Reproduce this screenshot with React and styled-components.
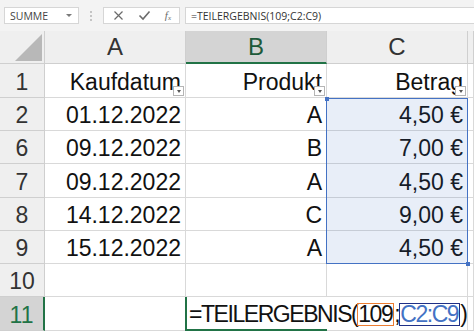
import React from 'react';
import styled, { createGlobalStyle } from 'styled-components';

const GREEN = '#217346';
const GRID = '#d9d9d9';

const GlobalStyle = createGlobalStyle`
  html, body {
    margin: 0;
    padding: 0;
    background: #ffffff;
    overflow: hidden;
  }
  * { box-sizing: border-box; }
`;

const rows = [
  { n: '1', a: 'Kaufdatum', b: 'Produkt', c: 'Betrag', head: true },
  { n: '2', a: '01.12.2022', b: 'A', c: '4,50 €' },
  { n: '6', a: '09.12.2022', b: 'B', c: '7,00 €' },
  { n: '7', a: '09.12.2022', b: 'A', c: '4,50 €' },
  { n: '8', a: '14.12.2022', b: 'C', c: '9,00 €' },
  { n: '9', a: '15.12.2022', b: 'A', c: '4,50 €' },
  { n: '10' },
  { n: '11', active: true },
];

export default function App() {
  return (
    <Page>
      <GlobalStyle />
      <Toolbar>
        <NameBox>
          <span>SUMME</span>
          <Caret />
        </NameBox>
        <Grip>
          <i /><i /><i />
        </Grip>
        <ButtonBox>
          <svg width="11" height="11" viewBox="0 0 11 11">
            <path d="M1.5 1.5 L9.5 9.5 M9.5 1.5 L1.5 9.5" stroke="#6b6b6b" strokeWidth="1.2" fill="none" />
          </svg>
          <svg width="13" height="11" viewBox="0 0 13 11">
            <path d="M1.5 5.5 L5 9 L11.5 1.5" stroke="#6b6b6b" strokeWidth="1.6" fill="none" />
          </svg>
          <Fx>f<sub>x</sub></Fx>
        </ButtonBox>
        <FormulaBox>=TEILERGEBNIS(109;C2:C9)</FormulaBox>
      </Toolbar>

      <Sheet>
        <Corner $row={1} $col={1}><Triangle /></Corner>
        <ColHead $row={1} $col={2}>A</ColHead>
        <ColHead $row={1} $col={3} $selected>B</ColHead>
        <ColHead $row={1} $col={4}>C</ColHead>
        <ColHead $row={1} $col={5} />

        {rows.map((r, i) => {
          const row = i + 2;
          return (
            <React.Fragment key={r.n}>
              <RowHead $row={row} $col={1} $selected={r.active}>{r.n}</RowHead>
              <Cell $row={row} $col={2}>
                {r.a}
                {r.head && <FilterButton />}
              </Cell>
              {r.active ? (
                <ActiveCell $row={row} $col={3}>
                  =TEILERGEBNIS(<RefBox $color="#ed7d31">109</RefBox>;<RefBox $color="#1f2f86" $text="#4472c4">C2:C9</RefBox>)
                </ActiveCell>
              ) : (
                <Cell $row={row} $col={3}>
                  {r.b}
                  {r.head && <FilterButton />}
                </Cell>
              )}
              <Cell $row={row} $col={4}>
                {r.c}
                {r.head && <FilterButton />}
              </Cell>
              <Cell $row={row} $col={5} />
            </React.Fragment>
          );
        })}

        <Selection />
      </Sheet>
    </Page>
  );
}

const Page = styled.div`
  width: 474px;
  height: 334px;
  background: #ffffff;
  font-family: "Liberation Sans", Arial, sans-serif;
`;

const Toolbar = styled.div`
  height: 31px;
  background: #f3f3f3;
  display: flex;
  align-items: flex-start;
  padding: 7px 0 0 4px;
`;

const Box = styled.div`
  height: 17px;
  background: #ffffff;
  border: 1px solid #d6d6d6;
  display: flex;
  align-items: center;
`;

const NameBox = styled(Box)`
  width: 75px;
  padding: 0 6px 0 5px;
  justify-content: space-between;
  font-family: "Open Sans", sans-serif;
  font-size: 10.5px;
  color: #444444;
`;

const Caret = styled.span`
  width: 0;
  height: 0;
  border-left: 3px solid transparent;
  border-right: 3px solid transparent;
  border-top: 3px solid #7a7a7a;
`;

const Grip = styled.div`
  width: 24px;
  height: 17px;
  display: flex;
  flex-direction: column;
  align-items: center;
  justify-content: center;
  gap: 2px;

  i {
    width: 2px;
    height: 2px;
    background: #c4c4c4;
  }
`;

const ButtonBox = styled(Box)`
  width: 77px;
  padding: 0 8px 0 9px;
  justify-content: space-between;
`;

const Fx = styled.span`
  font-family: "Liberation Serif", serif;
  font-style: italic;
  font-size: 11px;
  color: #6b6b6b;

  sub {
    font-size: 7px;
    vertical-align: -1px;
  }
`;

const FormulaBox = styled(Box)`
  flex: 1;
  margin-left: 5px;
  padding-left: 5px;
  border-right: none;
  font-family: "Open Sans", sans-serif;
  font-size: 10.5px;
  color: #333333;
  white-space: nowrap;
`;

const Sheet = styled.div`
  display: grid;
  grid-template-columns: 45px 141px 141px 141px 1fr;
  grid-template-rows: 33px 34px 33px 33px 34px 33px 33px 33px 34px;
  font-size: 23px;
  color: #111111;
`;

const Placed = styled.div`
  grid-row: ${p => p.$row};
  grid-column: ${p => p.$col};
  position: relative;
  border-right: 1px solid ${GRID};
  border-bottom: 1px solid ${GRID};
  display: flex;
  align-items: center;
  white-space: nowrap;
`;

const Corner = styled(Placed)`
  background: #efefef;
  border-color: #cfcfcf;
`;

const Triangle = styled.span`
  position: absolute;
  right: 2px;
  bottom: 2px;
  width: 0;
  height: 0;
  border-left: 27px solid transparent;
  border-bottom: 27px solid #b8b8b8;
`;

const ColHead = styled(Placed)`
  justify-content: center;
  background: ${p => (p.$selected ? '#d4d4d4' : '#efefef')};
  border-color: #cfcfcf;
  border-bottom: ${p => (p.$selected ? `2px solid ${GREEN}` : '1px solid #cfcfcf')};
  color: ${p => (p.$selected ? '#1e5a3a' : '#333333')};
  font-size: 24px;
`;

const RowHead = styled(Placed)`
  justify-content: center;
  padding-top: 3px;
  background: ${p => (p.$selected ? '#d4d4d4' : '#efefef')};
  border-color: #cfcfcf;
  border-right: ${p => (p.$selected ? `2px solid ${GREEN}` : '1px solid #cfcfcf')};
  color: ${p => (p.$selected ? GREEN : '#333333')};
`;

const Cell = styled(Placed)`
  justify-content: flex-end;
  padding: 3px 4px 0 0;
  background: #ffffff;
`;

const ActiveCell = styled(Placed)`
  z-index: 3;
  overflow: visible;
  padding: 3px 0 0 2px;
  border-left: 2px solid ${GREEN};
  border-bottom: 2px solid ${GREEN};
  border-right: none;
  margin-left: -1px;
  letter-spacing: -1.45px;
  background: transparent;
`;

const RefBox = styled.span`
  display: inline-block;
  border: 1.5px solid ${p => p.$color};
  color: ${p => p.$text || 'inherit'};
  line-height: 21px;
  padding: 0 1px 0 0;
`;

const FilterButton = styled.span`
  position: absolute;
  right: 1px;
  bottom: 1px;
  width: 11px;
  height: 10px;
  background: #ffffff;
  border: 1px solid #b5b5b5;
  display: flex;
  align-items: center;
  justify-content: center;

  &::after {
    content: '';
    border-left: 2.5px solid transparent;
    border-right: 2.5px solid transparent;
    border-top: 3px solid #555555;
  }
`;

const Selection = styled.div`
  grid-row: 3 / 8;
  grid-column: 4;
  position: relative;
  z-index: 2;
  margin-left: -1px;
  pointer-events: none;
  border: 1px solid #4472c4;
  background: rgba(68, 114, 196, 0.12);

  &::before,
  &::after {
    content: '';
    position: absolute;
    width: 4px;
    height: 4px;
    background: #4472c4;
  }
  &::before {
    left: -2px;
    top: -2px;
  }
  &::after {
    right: -3px;
    bottom: -3px;
  }
`;
